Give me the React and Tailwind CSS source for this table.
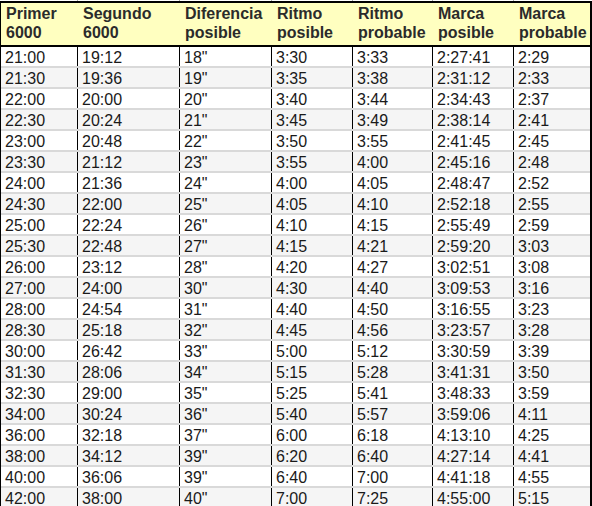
import React from "react";

const columnas = [
  { w: "w-[76px]", titulo: ["Primer", "6000"] },
  { w: "w-[102px]", titulo: ["Segundo", "6000"] },
  { w: "w-[92px]", titulo: ["Diferencia", "posible"] },
  { w: "w-[81px]", titulo: ["Ritmo", "posible"] },
  { w: "w-[80px]", titulo: ["Ritmo", "probable"] },
  { w: "w-[81px]", titulo: ["Marca", "posible"] },
  { w: "w-[77px]", titulo: ["Marca", "probable"] },
];

const filas = [
  ["21:00", "19:12", "18\"", "3:30", "3:33", "2:27:41", "2:29"],
  ["21:30", "19:36", "19\"", "3:35", "3:38", "2:31:12", "2:33"],
  ["22:00", "20:00", "20\"", "3:40", "3:44", "2:34:43", "2:37"],
  ["22:30", "20:24", "21\"", "3:45", "3:49", "2:38:14", "2:41"],
  ["23:00", "20:48", "22\"", "3:50", "3:55", "2:41:45", "2:45"],
  ["23:30", "21:12", "23\"", "3:55", "4:00", "2:45:16", "2:48"],
  ["24:00", "21:36", "24\"", "4:00", "4:05", "2:48:47", "2:52"],
  ["24:30", "22:00", "25\"", "4:05", "4:10", "2:52:18", "2:55"],
  ["25:00", "22:24", "26\"", "4:10", "4:15", "2:55:49", "2:59"],
  ["25:30", "22:48", "27\"", "4:15", "4:21", "2:59:20", "3:03"],
  ["26:00", "23:12", "28\"", "4:20", "4:27", "3:02:51", "3:08"],
  ["27:00", "24:00", "30\"", "4:30", "4:40", "3:09:53", "3:16"],
  ["28:00", "24:54", "31\"", "4:40", "4:50", "3:16:55", "3:23"],
  ["28:30", "25:18", "32\"", "4:45", "4:56", "3:23:57", "3:28"],
  ["30:00", "26:42", "33\"", "5:00", "5:12", "3:30:59", "3:39"],
  ["31:30", "28:06", "34\"", "5:15", "5:28", "3:41:31", "3:50"],
  ["32:30", "29:00", "35\"", "5:25", "5:41", "3:48:33", "3:59"],
  ["34:00", "30:24", "36\"", "5:40", "5:57", "3:59:06", "4:11"],
  ["36:00", "32:18", "37\"", "6:00", "6:18", "4:13:10", "4:25"],
  ["38:00", "34:12", "39\"", "6:20", "6:40", "4:27:14", "4:41"],
  ["40:00", "36:06", "39\"", "6:40", "7:00", "4:41:18", "4:55"],
  ["42:00", "38:00", "40\"", "7:00", "7:25", "4:55:00", "5:15"],
];

const App = () => {
  return (
    <div
      className="w-[592px] h-[506px] overflow-hidden bg-white"
      style={{ fontFamily: '"Liberation Sans", Arial, sans-serif' }}
    >
      {/* restos de la tabla anterior */}
      <div className="flex h-px pl-px pr-[2px]">
        {columnas.map((c, i) => (
          <div key={i} className={`${c.w} ${i > 0 ? "border-l border-[#aaaaaa]" : ""}`} />
        ))}
      </div>

      <div className="border-t-2 border-l border-r-2 border-black">
        <div className="flex bg-[#ffffc0] border-b-2 border-black pt-[1px] pb-[3px]">
          {columnas.map((c, i) => (
            <div
              key={i}
              className={`${c.w} ${i > 0 ? "border-l border-transparent" : ""} pl-[5px] text-[16px] leading-[19px] font-bold text-[#2b2b2b] whitespace-nowrap`}
            >
              {c.titulo[0]}
              <br />
              {c.titulo[1]}
            </div>
          ))}
        </div>

        {filas.map((fila, r) => (
          <div
            key={r}
            className={`flex border-b-2 border-[#d9d9d9] ${r % 2 ? "bg-[#f5f5f5]" : "bg-white"}`}
          >
            {fila.map((v, i) => (
              <div
                key={i}
                className={`${columnas[i].w} h-[19px] ${i > 0 ? "border-l border-black pl-[4px]" : "pl-[4px]"} pt-[3px] text-[16px] leading-[15px] text-[#1a1a1a] whitespace-nowrap`}
              >
                {v}
              </div>
            ))}
          </div>
        ))}
      </div>
    </div>
  );
};

export default App;
